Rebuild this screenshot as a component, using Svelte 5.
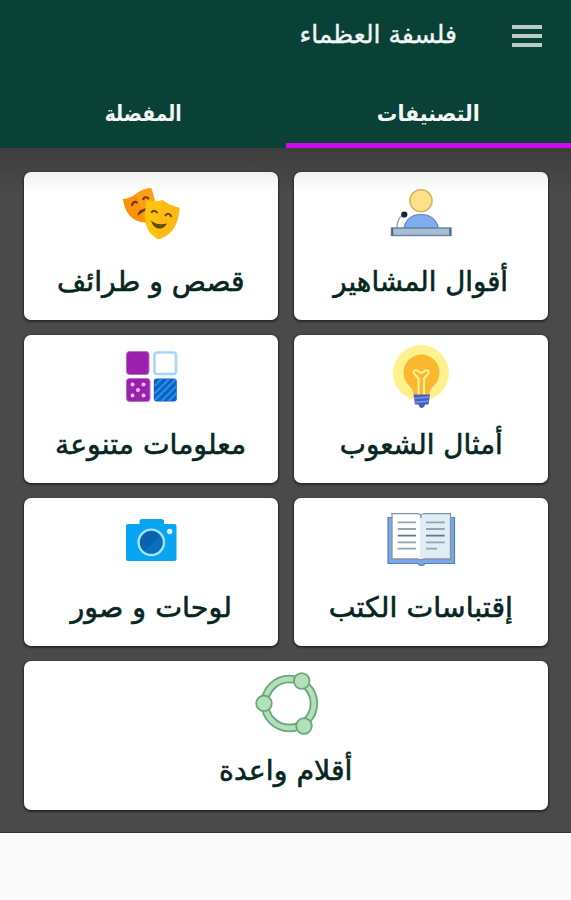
<script lang="ts">
  let active = "categories";

  const tabs = [
    { id: "categories", label: "التصنيفات", stretch: 0.93 },
    { id: "favorites", label: "المفضلة", stretch: 0.85 },
  ];

  const cards = [
    { icon: "speaker", label: "أقوال المشاهير", stretch: 0.985 },
    { icon: "masks", label: "قصص و طرائف", stretch: 1.01 },
    { icon: "bulb", label: "أمثال الشعوب", stretch: 0.99 },
    { icon: "tiles", label: "معلومات متنوعة", stretch: 1.01 },
    { icon: "book", label: "إقتباسات الكتب", stretch: 1.015 },
    { icon: "camera", label: "لوحات و صور", stretch: 1.02 },
    { icon: "circle", label: "أقلام واعدة", stretch: 1.015 },
  ];

  const lines = [24.3, 31, 37.7, 44.3, 50.7];
</script>

<div class="app" dir="rtl">
  <header>
    <div class="bar">
      <button class="menu" aria-label="القائمة">
        <span></span>
        <span></span>
        <span></span>
      </button>
      <h1>فلسفة العظماء</h1>
    </div>
    <nav>
      {#each tabs as tab (tab.id)}
        <button
          class="tab"
          class:active={active === tab.id}
          on:click={() => (active = tab.id)}
        >
          <span class="label" style:transform={`scaleX(${tab.stretch})`}>{tab.label}</span>
        </button>
      {/each}
    </nav>
  </header>

  <main>
    {#each cards as card (card.icon)}
      <button class="card">
        <svg width="100" height="76" viewBox="0 0 100 76" aria-hidden="true">
          {#if card.icon === "speaker"}
            <circle cx="50" cy="28.7" r="11" fill="#ffe08a" stroke="#d6b565" stroke-width="1.6" />
            <path d="M33 56c2-9 8-13.5 17-13.5S65 47 67.3 56z" fill="#7eaef0" stroke="#5585bd" stroke-width="1.2" />
            <path d="M26 56c0-6 1-10 6-13" fill="none" stroke="#8fa5b5" stroke-width="1.4" />
            <circle cx="33.3" cy="42.5" r="3.1" fill="#17243d" />
            <rect x="20.5" y="56" width="59.5" height="7.5" fill="#a7bdd6" stroke="#6b8199" stroke-width="1.4" />
            <path d="M21.5 56v7.5M79 56v7.5" stroke="#496583" stroke-width="1.5" />
          {:else if card.icon === "masks"}
            <path d="M22 27c5-.5 9-2 13-5s9-5.500 15-6c2 5 4 11 4 17 0 8-3 15-9 17.500-7 0-14-3-18-9-3-4.500-4.500-10-5-14.500z" fill="#fb9307" />
            <path d="M35 22c2.500-2 8-5.500 15-6 2 5 4 11 4 17l-9 17.500z" fill="#ff9f16" />
            <path d="M31 34c0-4 3-5 5.500-3M42 28c1-3.500 4-3.500 6-1" fill="none" stroke="#713c0b" stroke-width="2.2" />
            <path d="M36.500 44c0-5 4-7.500 9.500-8v3c-3 0-6 2-9.500 5z" fill="#713c0b" />
            <path d="M46 28c5 1 10 1.500 15 0 5 3.500 11 6.500 17.500 8-.500 8-2.500 15.500-6.500 21.500-4 5-10 9-15.500 9.500-5-3-9-7-11-13-2.500-8-1.500-18 .500-26z" fill="#ffc20d" />
            <path d="M61 28c5 3.500 11 6.500 17.500 8-.500 8-2.500 15.500-6.500 21.500-4 5-10 9-15.500 9.500z" fill="#ffb914" />
            <path d="M50.500 41c1-3 4-3 6 0M64 44c2-3 5-3 6.500 1" fill="none" stroke="#654a0b" stroke-width="2" />
            <path d="M50 48.500c5 4 10 4.500 16 3-2 4-5 5.500-8.500 5-4-.5-6.500-4-7.500-8z" fill="#654a0b" />
          {:else if card.icon === "bulb"}
            <circle cx="50" cy="38" r="28" fill="#fff28c" />
            <path d="M42.500 60c0-5-2-7-5-10a18 18 0 1 1 26 0c-3 3-5 5-5 10z" fill="#fbb72e" />
            <path d="M47.500 60V43.500L43 38.500c-1-2.500.5-4 3-3 2 .8 2.500 2.500 4.200 2.500s2.200-1.700 4.200-2.500c2.500-1 4 .5 3 3L53 43.500V60" fill="none" stroke="#fff08a" stroke-width="2.200" />
            <path d="M42.500 59.500H59L57.500 69.500h-3.500c-.5 4.500-6 4.500-6.500 0H44z" fill="#4560c4" />
            <path d="M43 63.500l15.500-1.500M43.500 67.500l14-1.500" stroke="#8391e0" stroke-width="1.300" />
          {:else if card.icon === "tiles"}
            <rect x="25.500" y="16.500" width="22.500" height="23" rx="3" fill="#9c20b0" stroke="#bd6dc9" />
            <rect x="53.500" y="17.500" width="21.500" height="21.500" rx="2.500" fill="#fff" stroke="#a7d6fa" stroke-width="2.600" />
            <rect x="25.500" y="43.500" width="23.500" height="23" rx="3" fill="#9c20b0" stroke="#bd6dc9" />
            <g fill="#f2c9f6">
              <circle cx="31.500" cy="49.500" r="2" />
              <circle cx="42.500" cy="49.500" r="2" />
              <circle cx="37" cy="55" r="2" />
              <circle cx="31.500" cy="60.500" r="2" />
              <circle cx="42.500" cy="60.500" r="2" />
            </g>
            <rect x="52.800" y="43.500" width="23" height="23" rx="3" fill="#0b62c4" />
            <path d="M53.500 51l7-7M53.500 58.500L68 44M54 65l20.500-20.500M60.500 66l15-15M67.500 66l8-8" stroke="#2c91ea" stroke-width="1.800" />
          {:else if card.icon === "book"}
            <path d="M17 19.500h66.500v46H54c-1 2.500-6 2.500-7 0H17z" fill="#79a9e6" stroke="#557fbd" stroke-width="1.200" />
            <path d="M21 15.700h25.500c2 0 3.500 1 3.500 2V63c0-1-2-2-4-2H21z" fill="#fff" stroke="#8292a8" stroke-width="1.300" />
            <path d="M50 17.700c0-1 2-2 4-2h25.500V61H54c-2 0-4 1-4 2z" fill="#e0edf5" stroke="#8292a8" stroke-width="1.300" />
            <path d="M50 20v41" stroke="#e0edf5" stroke-width="2" />
            {#each lines as y, i}
              <path d="M26.700 {y}H45M55 {y}H{i === 4 ? 66 : 73.7}" stroke={i === 2 ? "#60758c" : "#94a3b1"} stroke-width="1.800" />
            {/each}
          {:else if card.icon === "camera"}
            <path d="M27 26h11.500v-2.500q0-2.500 2.500-2.500h19.500q2.500 0 2.500 2.500V26h10.500q2 0 2 2v33q0 2-2 2H27q-2 0-2-2V28q0-2 2-2z" fill="#08a5f3" />
            <circle cx="50.300" cy="44.300" r="12.700" fill="#0870bd" stroke="#a7def9" stroke-width="2.400" />
            <path d="M41.500 38a11 11 0 0 1 17.500 0L43 53a11 11 0 0 1-1.500-15z" fill="#0863ad" />
            <circle cx="68.700" cy="33.500" r="2.700" fill="#e0f5ff" />
          {:else}
            <circle cx="53.400" cy="42.500" r="24.500" fill="none" stroke="#68a77f" stroke-width="8.400" />
            <circle cx="53.400" cy="42.500" r="24.500" fill="none" stroke="#b4e0b7" stroke-width="4.800" />
            <g fill="#b4e0b7" stroke="#68a77f" stroke-width="1.800">
              <circle cx="65.700" cy="20" r="7.800" />
              <circle cx="28" cy="42.300" r="7.800" />
              <circle cx="68" cy="65" r="7.800" />
            </g>
          {/if}
        </svg>
        <span class="label" style:transform={`scaleX(${card.stretch})`}>{card.label}</span>
      </button>
    {/each}
  </main>
</div>

<style>
  :global(body) {
    margin: 0;
    background: #fafafa;
  }

  .app {
    min-height: 900px;
    background: #fafafa;
    font-family: "DejaVu Sans", sans-serif;
  }

  button {
    border: none;
    background: none;
    padding: 0;
    font: inherit;
    cursor: pointer;
  }

  header {
    height: 148px;
    background: #0a4137;
    color: #f1f5f3;
  }

  .bar {
    display: flex;
    align-items: center;
    gap: 55px;
    height: 71px;
    padding-right: 29px;
  }

  .menu {
    display: flex;
    flex-direction: column;
    gap: 5px;
    width: 30px;
  }

  .menu span {
    height: 4px;
    background: #b9cbc6;
  }

  h1 {
    margin: 0;
    font-size: 25px;
    font-weight: normal;
    line-height: 40px;
    white-space: nowrap;
    padding-bottom: 2px;
    -webkit-text-stroke: 0.4px;
  }

  nav {
    display: grid;
    grid-template-columns: 1fr 1fr;
    height: 77px;
  }

  .tab {
    color: #f5f8f7;
    font-size: 22px;
    font-weight: bold;
    padding-top: 12px;
    border-bottom: 5px solid transparent;
  }

  .tab.active {
    border-bottom-color: #cc0aef;
  }

  main {
    display: grid;
    grid-template-columns: 1fr 1fr;
    grid-auto-rows: 148px;
    gap: 15px 16px;
    box-sizing: border-box;
    height: 685px;
    padding: 24px 23px 23px 24px;
    background: linear-gradient(#3d3d3d, #4a4a4a 45px);
    border-bottom: 1px solid #373737;
  }

  .card {
    display: flex;
    flex-direction: column;
    align-items: center;
    background: #fff;
    border-radius: 7px;
    box-shadow: 0 1px 2px 1px #292929;
    color: #06261f;
  }

  .card:nth-child(-n + 2) {
    background: linear-gradient(#f1f1f1, #fff 22px);
  }

  .card:last-child {
    grid-column: span 2;
    height: 149px;
  }

  .label {
    display: inline-block;
    white-space: nowrap;
  }

  .card .label {
    font-size: 28px;
    line-height: 68px;
    -webkit-text-stroke: 0.6px;
  }

  svg {
    display: block;
    flex: none;
  }
</style>
